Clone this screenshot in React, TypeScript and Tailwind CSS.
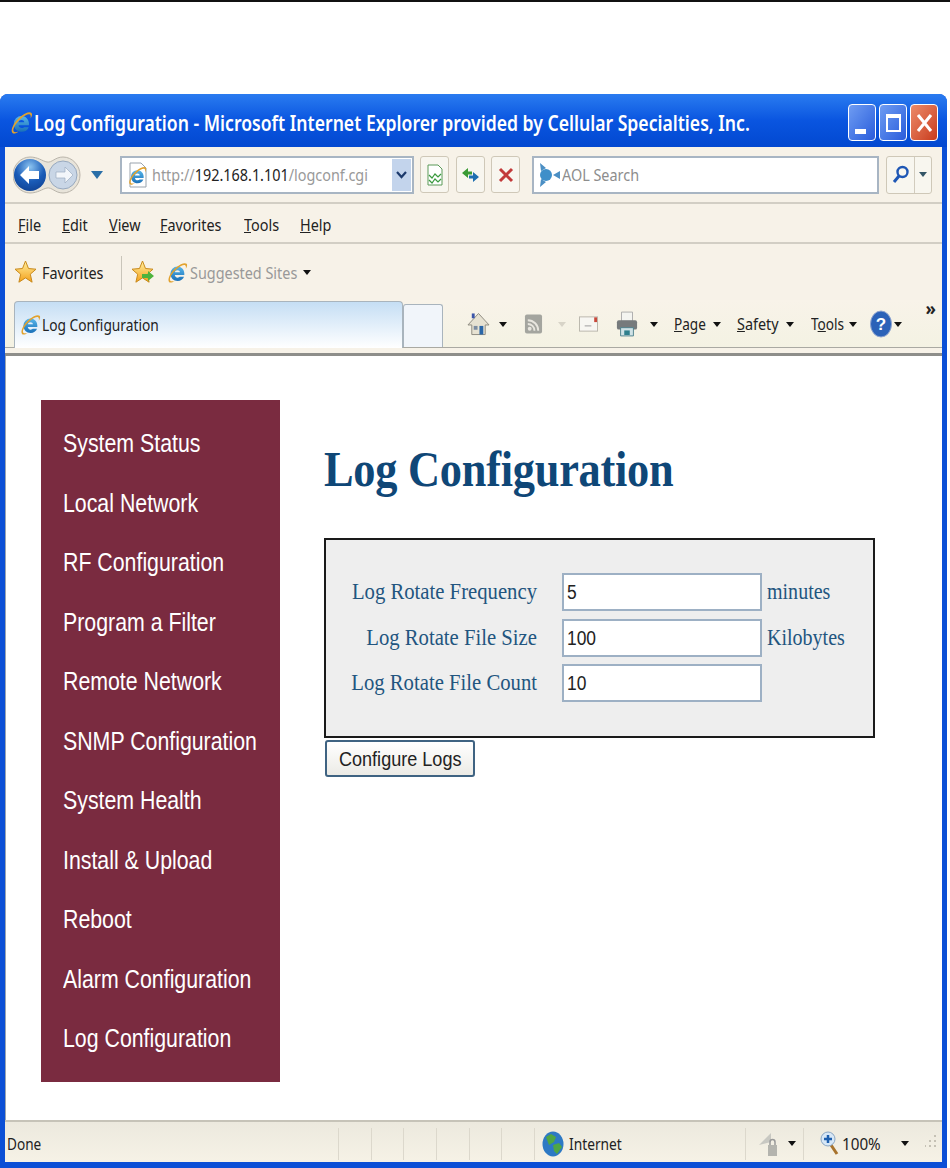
import React from "react";

const chrome = { fontFamily: '"Noto Sans", sans-serif' };

function IE({ size = 22 }: { size?: number }) {
  return (
    <svg width={size} height={size} viewBox="0 0 24 24" className="shrink-0">
      <defs>
        <linearGradient id="iebl" x1="0" y1="0" x2="0" y2="1">
          <stop offset="0" stopColor="#57b6ea" />
          <stop offset="1" stopColor="#1a70b8" />
        </linearGradient>
      </defs>
      <path d="M12.500 5a7.700 7.700 0 0 0-7.700 7.900c0 4.500 3.400 7.900 7.900 7.900 3.300 0 5.900-1.700 7-4.600h-4.600a3.400 3.400 0 0 1-2.400.9c-1.700 0-3-1.100-3.100-2.800h10.300c.1-.5.1-1 .1-1.500C20 8.400 16.700 5 12.500 5zm-2.900 6.300c.3-1.400 1.400-2.300 2.900-2.300s2.600.9 2.800 2.300z" fill="url(#iebl)" />
      <path d="M3.500 22C1 19.500 4.500 11.500 11 6c5-4.200 9.800-5.700 11.500-4 1 1 .6 3-.9 5.400.3-1.800.2-3-.5-3.700-1.300-1.200-5.200.4-9.300 4C6.500 12.400 3.300 18 4.700 20.500c1 .9 2.800.8 4.800-.1-2.200 1.900-4.800 2.700-6 1.600z" fill="#e2a22e" />
    </svg>
  );
}

function Caret({ color = "#111" }: { color?: string }) {
  return (
    <svg width="8" height="5" viewBox="0 0 8 5" className="shrink-0">
      <path d="M0 0h8L4 5z" fill={color} />
    </svg>
  );
}

function Star({ arrow = false }: { arrow?: boolean }) {
  return (
    <svg width="23" height="25" viewBox="0 0 23 25" className="shrink-0">
      <defs>
        <linearGradient id="stg" x1="0" y1="0" x2="0" y2="1">
          <stop offset="0" stopColor="#fff0a0" />
          <stop offset="1" stopColor="#f5a019" />
        </linearGradient>
      </defs>
      <path d="M11.500 1l3 7.500 7.500.7-5.700 5 1.800 8-6.600-4.300-6.600 4.300 1.800-8L1 9.200l7.500-.7z" fill="url(#stg)" stroke="#c98a1c" strokeWidth="1" />
      {arrow && <path d="M11 14h6v-3l6 5-6 5v-3h-6z" fill="#4db33d" />}
    </svg>
  );
}

function Tool({ children }: { children: React.ReactNode }) {
  return (
    <div className="w-[29px] h-[37px] mr-[6.500px] rounded-[3px] border border-[#cfc8b8] bg-[#f8f6ef] flex items-center justify-center">
      {children}
    </div>
  );
}

function Sq({ children, cls = "scale-x-90" }: { children: React.ReactNode; cls?: string }) {
  return <span className={"inline-block origin-left whitespace-nowrap " + cls}>{children}</span>;
}

function U({ k, rest, cls }: { k: string; rest: string; cls?: string }) {
  return (
    <Sq cls={cls}>
      <span className="underline">{k}</span>
      {rest}
    </Sq>
  );
}

const nav = [
  "System Status",
  "Local Network",
  "RF Configuration",
  "Program a Filter",
  "Remote Network",
  "SNMP Configuration",
  "System Health",
  "Install & Upload",
  "Reboot",
  "Alarm Configuration",
  "Log Configuration",
];

const fields = [
  { label: "Log Rotate Frequency", value: "5", unit: "minutes" },
  { label: "Log Rotate File Size", value: "100", unit: "Kilobytes" },
  { label: "Log Rotate File Count", value: "10", unit: "" },
];

const menu: [string, string, string][] = [
  ["F", "ile", "w-[44px]"],
  ["E", "dit", "w-[47px]"],
  ["V", "iew", "w-[51px]"],
  ["F", "avorites", "w-[84px]"],
  ["T", "ools", "w-[56px]"],
  ["H", "elp", "w-[50px]"],
];

export default function App() {
  return (
    <div className="w-[950px] h-[1168px] bg-white flex flex-col overflow-hidden" style={chrome}>
      <div className="h-[2px] bg-[#111] shrink-0" />
      <div className="h-[92px] shrink-0" />
      <div className="w-[947px] flex-1 flex flex-col rounded-t-[8px] overflow-hidden bg-[#0b4fd6] px-[5px] pb-[6px]">
        {/* title bar */}
        <div className="h-[53px] -mx-[5px] shrink-0 flex items-center pt-[4px] pl-[9px] pr-[9px] bg-gradient-to-b from-[#2a7bf0] via-[#0a55e0] to-[#0348d0]">
          <IE size={24} />
          <div className="ml-[1px] w-[715px]">
            <Sq cls="scale-x-[.80]">
              <span className="text-white text-[22px] font-semibold">
                Log Configuration - Microsoft Internet Explorer provided by Cellular Specialties, Inc.
              </span>
            </Sq>
          </div>
          <div className="ml-auto flex gap-[3px]">
            <div className="w-[28px] h-[37px] rounded-[4px] border border-white bg-gradient-to-br from-[#6f9cf2] to-[#2a5bdb] flex items-end pb-[6px] pl-[6px]">
              <div className="w-[11px] h-[5px] bg-white" />
            </div>
            <div className="w-[28px] h-[37px] rounded-[4px] border border-white bg-gradient-to-br from-[#6f9cf2] to-[#2a5bdb] flex items-center justify-center">
              <div className="w-[15px] h-[18px] border-2 border-t-4 border-white" />
            </div>
            <div className="w-[28px] h-[37px] rounded-[4px] border border-white bg-gradient-to-br from-[#ec8a68] to-[#c8391a] flex items-center justify-center">
              <svg width="17" height="20" viewBox="0 0 17 20">
                <path d="M2 2l13 16M15 2L2 18" stroke="#fff" strokeWidth="3" />
              </svg>
            </div>
          </div>
        </div>

        {/* chrome */}
        <div className="shrink-0 bg-[#f7f2e8] text-[#222] text-[16px]">
          {/* address row */}
          <div className="h-[57px] flex items-center pl-[8px] border-b-2 border-[#d2cec4]">
            <svg width="72" height="40" viewBox="0 0 72 40" className="shrink-0">
              <defs>
                <radialGradient id="bk" cx="0.5" cy="0.25" r="0.9">
                  <stop offset="0" stopColor="#8cc4f0" />
                  <stop offset="0.5" stopColor="#1a5cb8" />
                  <stop offset="1" stopColor="#0c3a88" />
                </radialGradient>
              </defs>
              <path d="M17 2c8 0 12 4 17 5 5 1 8-5 16-5 9 0 17 8 17 18s-8 18-17 18c-8 0-11-6-16-5-5 1-9 5-17 5C8 38 0 30 0 20S8 2 17 2z" fill="#e8e4da" stroke="#b9b4aa" />
              <circle cx="17" cy="20" r="16" fill="url(#bk)" />
              <path d="M7 20l9-9v5h10v8H16v5z" fill="#fff" />
              <circle cx="50" cy="20" r="14" fill="#c9d6e6" stroke="#98a9be" />
              <path d="M60 20l-8-8v5h-9v6h9v5z" fill="#f3f6fa" stroke="#9cacc0" strokeWidth=".7" />
            </svg>
            <div className="ml-[6px] mr-[17px]">
              <svg width="12" height="8" viewBox="0 0 12 8" className="block">
                <path d="M0 0h12L6 8z" fill="#2a6fa8" />
              </svg>
            </div>
            <div className="w-[294px] h-[38px] border-2 border-[#a8b5c3] bg-white flex items-center pl-[3px] pr-[2px]">
              <svg width="24" height="26" viewBox="0 0 24 26" className="shrink-0">
                <path d="M5 1h11l5 5v19H5z" fill="#fff" stroke="#9aa3ad" />
              </svg>
              <div className="-ml-[22px] mt-[3px] mr-[5px]">
                <IE size={20} />
              </div>
              <Sq>
                <span className="text-[#999]">
                  http://<span className="text-[#222]">192.168.1.101</span>/logconf.cgi
                </span>
              </Sq>
              <div className="ml-auto shrink-0 w-[19px] h-[32px] bg-[#c3d4ec] flex items-center justify-center">
                <svg width="11" height="8" viewBox="0 0 11 8">
                  <path d="M1 1l4.500 5L10 1" fill="none" stroke="#1c3a6c" strokeWidth="2.200" />
                </svg>
              </div>
            </div>
            <div className="w-[6px]" />
            <Tool>
              <svg width="18" height="22" viewBox="0 0 18 22">
                <path d="M2 1h10l4 4v16H2z" fill="#fff" stroke="#5b9a58" />
                <path d="M3 11l3 3 3-4 3 3 3-3M3 16l3 3 3-4 3 3 3-3" fill="none" stroke="#3b9a3f" strokeWidth="1.200" />
              </svg>
            </Tool>
            <Tool>
              <svg width="20" height="20" viewBox="0 0 20 20">
                <path d="M8 3L2 8l6 5V9.500h4V6.500H8z" fill="#3a9a35" />
                <path d="M13 17l6-5-6-5v3.500H9v3h4z" fill="#1e6fb0" />
              </svg>
            </Tool>
            <Tool>
              <svg width="18" height="18" viewBox="0 0 18 18">
                <path d="M3 3l12 12M15 3L3 15" stroke="#c23a3a" strokeWidth="3" />
              </svg>
            </Tool>
            <div className="w-[5.500px]" />
            <div className="w-[347px] h-[38px] border-2 border-[#a8b5c3] bg-white flex items-center pl-[2px]">
              <svg width="26" height="28" viewBox="0 0 26 28" className="shrink-0">
                <circle cx="10" cy="14" r="6" fill="#3f8fc9" />
                <path d="M4 2l6 5-5 3zM4 26l6-5-5-3zM17 14l7-4v8z" fill="#4b8fc4" />
              </svg>
              <span className="text-[#8d8d8d]">
                <Sq>AOL Search</Sq>
              </span>
            </div>
            <div className="ml-[7px] w-[46px] h-[38px] rounded-[3px] border border-[#cfc8b8] bg-[#f8f6ef] flex items-center">
              <div className="w-[28px] h-full border-r border-[#d2ccbe] flex items-center justify-center">
                <svg width="18" height="20" viewBox="0 0 18 20">
                  <circle cx="10.500" cy="7" r="5" fill="none" stroke="#1f57b5" strokeWidth="2.400" />
                  <path d="M7 11l-5 6" stroke="#1f57b5" strokeWidth="3" />
                </svg>
              </div>
              <div className="flex-1 flex justify-center">
                <Caret color="#356" />
              </div>
            </div>
          </div>

          {/* menu */}
          <div className="h-[40px] flex items-center pl-[13px] pt-[4px] border-b-2 border-[#d2cec4]">
            {menu.map(([k, r, w]) => (
              <div key={k + r} className={w}>
                <U k={k} rest={r} />
              </div>
            ))}
          </div>

          {/* favorites */}
          <div className="h-[56px] flex items-center pl-[9px] pt-[1px]">
            <Star />
            <div className="ml-[5px] w-[79px]">
              <Sq>Favorites</Sq>
            </div>
            <div className="w-px h-[34px] bg-[#c9c5ba]" />
            <div className="ml-[9px]">
              <Star arrow />
            </div>
            <div className="ml-[12px]">
              <IE size={22} />
            </div>
            <div className="ml-[2px] w-[105px] text-[#999]">
              <Sq>Suggested Sites</Sq>
            </div>
            <div className="ml-[8px]">
              <Caret />
            </div>
          </div>

          {/* tabs row */}
          <div className="h-[48px] flex items-end pl-[9px] relative border-b border-[#aaa9a2] bg-gradient-to-b from-[#f8f3e9] to-[#f4f2e3]">
            <div className="w-[389px] h-[47px] -mb-px rounded-t-[4px] border border-b-0 border-[#a9b4bd] bg-gradient-to-b from-[#c5def4] to-white flex items-center pl-[4px]">
              <IE size={22} />
              <span className="ml-[1px]">
                <Sq cls="scale-x-[.86]">Log Configuration</Sq>
              </span>
            </div>
            <div className="w-[40px] h-[43px] rounded-t-[3px] border border-b-0 border-[#a9b4bd] bg-[#f1f5fa]" />
            <div className="flex items-center h-[46px] text-[16px]">
              <svg width="23" height="26" viewBox="0 0 24 26" className="ml-[24px] shrink-0">
                <path d="M12 2L1 14h4v10h14V14h4z" fill="#e7e2d2" stroke="#8d8a80" />
                <path d="M5 2h3v5H5z" fill="#3b55a8" />
                <path d="M13 15h4v9h-4z" fill="#2a66a8" />
                <path d="M7 15h4v4H7z" fill="#7c8ca0" />
              </svg>
              <div className="ml-[9px]">
                <Caret />
              </div>
              <svg width="19" height="24" viewBox="0 0 20 24" className="ml-[17px] shrink-0">
                <rect x="1" y="2" width="18" height="20" rx="2" fill="#a4a59f" />
                <circle cx="6" cy="17" r="2" fill="#e8e6df" />
                <path d="M4 12a7 7 0 0 1 7 7M4 8a11 11 0 0 1 11 11" fill="none" stroke="#e8e6df" strokeWidth="2" />
              </svg>
              <div className="ml-[15px]">
                <Caret color="#d8d4c8" />
              </div>
              <svg width="19" height="16" viewBox="0 0 20 16" className="ml-[13px] shrink-0">
                <rect x=".5" y=".5" width="19" height="15" fill="#f7f6f2" stroke="#b9b6ac" />
                <path d="M16 1h3v5h-3z" fill="#c9483a" />
                <path d="M6 10h7" stroke="#999" />
              </svg>
              <svg width="22" height="28" viewBox="0 0 24 28" className="ml-[18px] shrink-0">
                <path d="M6 1h12v10H6z" fill="#f4f4f0" stroke="#aaa" />
                <rect x="1" y="10" width="22" height="10" rx="2" fill="#767a7c" />
                <path d="M5 18h14v9H5z" fill="#cfe2e6" stroke="#4a7f8a" />
                <path d="M9 21h6v5H9z" fill="#2f7f8c" />
              </svg>
              <div className="ml-[12px]">
                <Caret />
              </div>
              <div className="ml-[16px] w-[39px]"><U k="P" rest="age" cls="scale-x-[.85]" /></div>
              <Caret />
              <div className="ml-[16px] w-[49px]"><U k="S" rest="afety" /></div>
              <Caret />
              <div className="ml-[17px] w-[38px]">
                <Sq cls="scale-x-[.85]">T<span className="underline">o</span>ols</Sq>
              </div>
              <Caret />
              <svg width="22" height="28" viewBox="0 0 22 28" className="ml-[13px] shrink-0">
                <ellipse cx="11" cy="14" rx="10.500" ry="13" fill="#2c62b8" stroke="#8fa4d0" />
                <text x="11" y="20" textAnchor="middle" fontSize="17" fontWeight="700" fill="#fff" fontFamily="Liberation Sans, sans-serif">?</text>
              </svg>
              <div className="ml-[2px]"><Caret /></div>
            </div>
            <span className="absolute right-[6px] top-0 text-[17px] font-bold leading-[18px]">»</span>
          </div>
          <div className="h-[5px]" />
          <div className="h-[3px] bg-[#8e8e8a]" />
        </div>

        {/* content */}
        <div className="flex-1 bg-white flex border-l border-[#9aa5b0] pl-[35px] pt-[44px] min-h-0">
          <div
            className="w-[239px] h-[682px] bg-[#7a2b40] shrink-0 pl-[22px] pt-[14px] text-white text-[26px]"
            style={{ fontFamily: '"Liberation Sans", sans-serif' }}
          >
            {nav.map((n) => (
              <div key={n} className="h-[59.500px] flex items-center">
                <Sq cls="scale-x-[.82]">{n}</Sq>
              </div>
            ))}
          </div>
          <div className="ml-[44px] flex flex-col" style={{ fontFamily: '"Liberation Serif", serif' }}>
            <h1 className="mt-[39px] text-[50px] leading-[60px] font-bold text-[#0f4777] tracking-[-0.3px] whitespace-nowrap origin-left scale-x-[.888]">
              Log Configuration
            </h1>
            <div className="mt-[39px] w-[551px] h-[200px] border-2 border-[#1a1a1a] bg-[#eeeeee] pt-[33px] flex flex-col gap-[7px]">
              {fields.map((f) => (
                <div key={f.label} className="flex items-center h-[38.500px] text-[23px] text-[#22557f]">
                  <div className="w-[211px] text-right whitespace-nowrap origin-right scale-x-[.9]">{f.label}</div>
                  <div
                    className="ml-[25px] w-[200px] h-[38px] border-2 border-[#9db0c4] bg-white flex items-center pl-[3px] text-[#222] text-[20px]"
                    style={{ fontFamily: '"Liberation Sans", sans-serif' }}
                  >
                    <Sq cls="scale-x-[.87]">{f.value}</Sq>
                  </div>
                  <div className="ml-[5px]">
                    <Sq cls="scale-x-[.87]">{f.unit}</Sq>
                  </div>
                </div>
              ))}
            </div>
            <div
              className="mt-[2px] ml-[1px] w-[150px] h-[37px] rounded-[3px] border-2 border-[#3f6382] bg-gradient-to-b from-white to-[#ecebe6] flex items-center justify-center text-[21px] text-[#222]"
              style={{ fontFamily: '"Liberation Sans", sans-serif' }}
            >
              <span className="whitespace-nowrap scale-x-[.86]">Configure Logs</span>
            </div>
          </div>
        </div>

        {/* status bar */}
        <div className="h-[42px] shrink-0 border-t-2 border-[#c6c3b8] pt-[3px] bg-gradient-to-b from-[#ece9de] to-[#f6f2e6] flex items-center text-[16px] text-[#222]">
          <span className="pl-[2px] w-[333px]">
            <Sq cls="scale-x-[.85]">Done</Sq>
          </span>
          {[0, 1, 2, 3, 4, 5].map((i) => (
            <div key={i} className="w-[32.700px] h-[32px] border-l border-[#dcd8cc]" />
          ))}
          <div className="w-[211px] h-[32px] border-l border-[#dcd8cc] flex items-center pl-[7px]">
            <svg width="22" height="26" viewBox="0 0 22 26" className="shrink-0">
              <ellipse cx="11" cy="13" rx="10.500" ry="12.500" fill="#2d79c4" />
              <path d="M4 6l5-3 5 3-2 5-5 3zM11 14l6-2 3 4-5 7-3-3z" fill="#4fa644" />
            </svg>
            <span className="ml-[5px]">
              <Sq cls="scale-x-[.86]">Internet</Sq>
            </span>
          </div>
          <div className="w-[58px] h-[32px] border-l border-[#dcd8cc] flex items-center pl-[12px]">
            <svg width="22" height="28" viewBox="0 0 22 28" className="shrink-0">
              <path d="M1 15L13 3v9z" fill="#c8c8c2" />
              <path d="M10 15h9v11h-9z" fill="#b4b4ae" />
              <path d="M12 15v-3a2.500 2.500 0 0 1 5 0v3" fill="none" stroke="#999" strokeWidth="1.500" />
            </svg>
            <div className="ml-[8px]"><Caret /></div>
          </div>
          <div className="flex-1 h-[32px] border-l border-[#dcd8cc] flex items-center pl-[16px]">
            <svg width="20" height="28" viewBox="0 0 20 28" className="shrink-0">
              <path d="M11 15l6 9" stroke="#a8732d" strokeWidth="3" />
              <circle cx="8" cy="9" r="7" fill="#d7e7f6" stroke="#8ba6c2" />
              <path d="M8 5v8M4 9h8" stroke="#1e5fae" strokeWidth="2.500" />
            </svg>
            <div className="ml-[2px] w-[40px]">
              <Sq cls="scale-x-95">100%</Sq>
            </div>
            <div className="ml-[19px]"><Caret /></div>
            <svg width="12" height="24" viewBox="0 0 12 24" className="ml-[16px] shrink-0">
              <path d="M9 3h2v2H9zM9 8h2v2H9zM4 8h2v2H4zM9 13h2v2H9zM4 13h2v2H4zM-1 13h2v2h-2z" fill="#c5c1b5" />
            </svg>
          </div>
        </div>
      </div>
    </div>
  );
}
